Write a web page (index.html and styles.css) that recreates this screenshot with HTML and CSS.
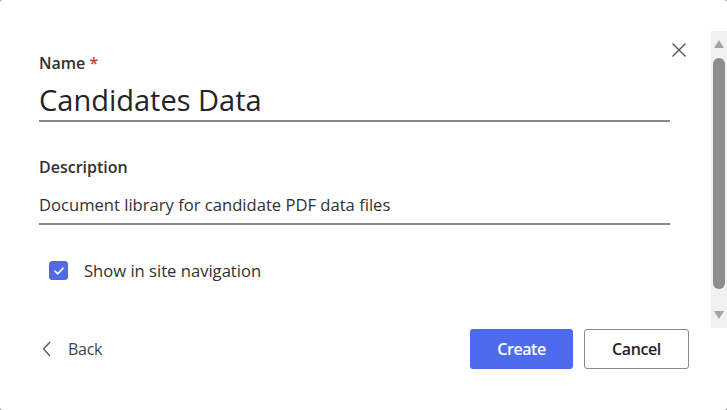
FILE: index.html
```html
<!DOCTYPE html>
<html lang="en">
<head>
<meta charset="utf-8">
<title>Create library</title>
<link rel="stylesheet" href="styles.css">
</head>
<body>
<div class="dialog">
  <button class="close" aria-label="Close">
    <svg width="16" height="16" viewBox="0 0 16 16"><path d="M1.5 1.5 L14.5 14.5 M14.5 1.5 L1.5 14.5" stroke="#555" stroke-width="1.4" fill="none"/></svg>
  </button>
  <div class="scrollbar">
    <div class="arrow up"></div>
    <div class="thumb"></div>
    <div class="arrow down"></div>
  </div>
  <div class="content">
    <div class="field">
      <label class="label">Name <span class="req">*</span></label>
      <div class="input big">Candidates Data</div>
    </div>
    <div class="field desc">
      <label class="label">Description</label>
      <div class="input">Document library for candidate PDF data files</div>
    </div>
    <div class="check-row">
      <span class="checkbox">
        <svg width="12" height="10" viewBox="0 0 12 10"><path d="M2 5.2 L4.8 7.8 L10 2.2" stroke="#fff" stroke-width="1.6" fill="none" stroke-linecap="round" stroke-linejoin="round"/></svg>
      </span>
      <span class="check-label">Show in site navigation</span>
    </div>
  </div>
  <div class="footer">
    <button class="back">
      <svg width="10" height="16" viewBox="0 0 10 16"><path d="M8 1 L1.5 8 L8 15" stroke="#555" stroke-width="1.3" fill="none"/></svg>
      <span>Back</span>
    </button>
    <div class="actions">
      <button class="btn primary">Create</button>
      <button class="btn secondary">Cancel</button>
    </div>
  </div>
</div>
</body>
</html>
```
FILE: styles.css
```css
* { box-sizing: border-box; }
html, body { margin: 0; padding: 0; }
body {
  width: 727px;
  height: 410px;
  background: #9a9a9a;
  font-family: "Open Sans", "Noto Sans", sans-serif;
  color: #242424;
  overflow: hidden;
}
.dialog {
  position: relative;
  width: 727px;
  height: 410px;
  background: #fff;
  border-radius: 3px;
  padding: 53px 0 0 39px;
  display: flex;
  flex-direction: column;
}
.close {
  position: absolute;
  top: 42px;
  left: 671px;
  width: 16px;
  height: 16px;
  padding: 0;
  border: 0;
  background: none;
  display: flex;
}
.scrollbar {
  position: absolute;
  top: 31px;
  left: 711px;
  width: 16px;
  height: 297px;
  background: #f1f1f1;
  display: flex;
  flex-direction: column;
  align-items: center;
  padding: 9px 0 9px;
}
.arrow {
  width: 0;
  height: 0;
  border-left: 5px solid transparent;
  border-right: 5px solid transparent;
}
.arrow.up { border-bottom: 8px solid #a3a3a3; }
.arrow.down { border-top: 8px solid #a3a3a3; }
.thumb {
  width: 12px;
  margin: 10px 0 22px;
  flex: 1;
  background: #8d8d8d;
  border-radius: 6px;
}
.content {
  width: 631px;
  display: flex;
  flex-direction: column;
}
.label {
  display: block;
  font-size: 16px;
  font-weight: 600;
  line-height: 20px;
  color: #323130;
}
.req { color: #d13438; }
.input {
  border-bottom: 2px solid #8a8a8a;
  font-size: 16.6px;
  color: #323130;
}
.input.big {
  margin-top: 7px;
  font-size: 29px;
  line-height: 40px;
  font-weight: 400;
  color: #242424;
}
.field.desc { margin-top: 35px; }
.field.desc .input {
  margin-top: 16px;
  line-height: 24px;
  padding-bottom: 6px;
}
.check-row {
  margin-top: 34px;
  margin-left: 10px;
  display: flex;
  align-items: center;
  gap: 16px;
}
.checkbox {
  width: 19px;
  height: 19px;
  border-radius: 3px;
  background: #4f6bed;
  border: 1px solid #6a6a8a;
  display: flex;
  align-items: center;
  justify-content: center;
}
.check-label {
  font-size: 16.6px;
  color: #323130;
}
.footer {
  margin-top: 47px;
  width: 650px;
  display: flex;
  align-items: center;
  justify-content: space-between;
}
.back {
  margin-left: 3px;
  display: flex;
  align-items: center;
  gap: 16px;
  border: 0;
  background: none;
  padding: 0;
  font-family: inherit;
  font-size: 16px;
  color: #444;
  letter-spacing: -0.3px;
}
.actions {
  display: flex;
  gap: 11px;
}
.btn {
  height: 40px;
  border-radius: 3px;
  font-family: inherit;
  font-size: 16px;
  font-weight: 600;
  letter-spacing: -0.4px;
}
.btn.primary {
  width: 103px;
  background: #4f6bed;
  color: #fff;
  border: 0;
}
.btn.secondary {
  width: 105px;
  background: #fff;
  color: #242424;
  border: 1px solid #8a8a8a;
}
```
